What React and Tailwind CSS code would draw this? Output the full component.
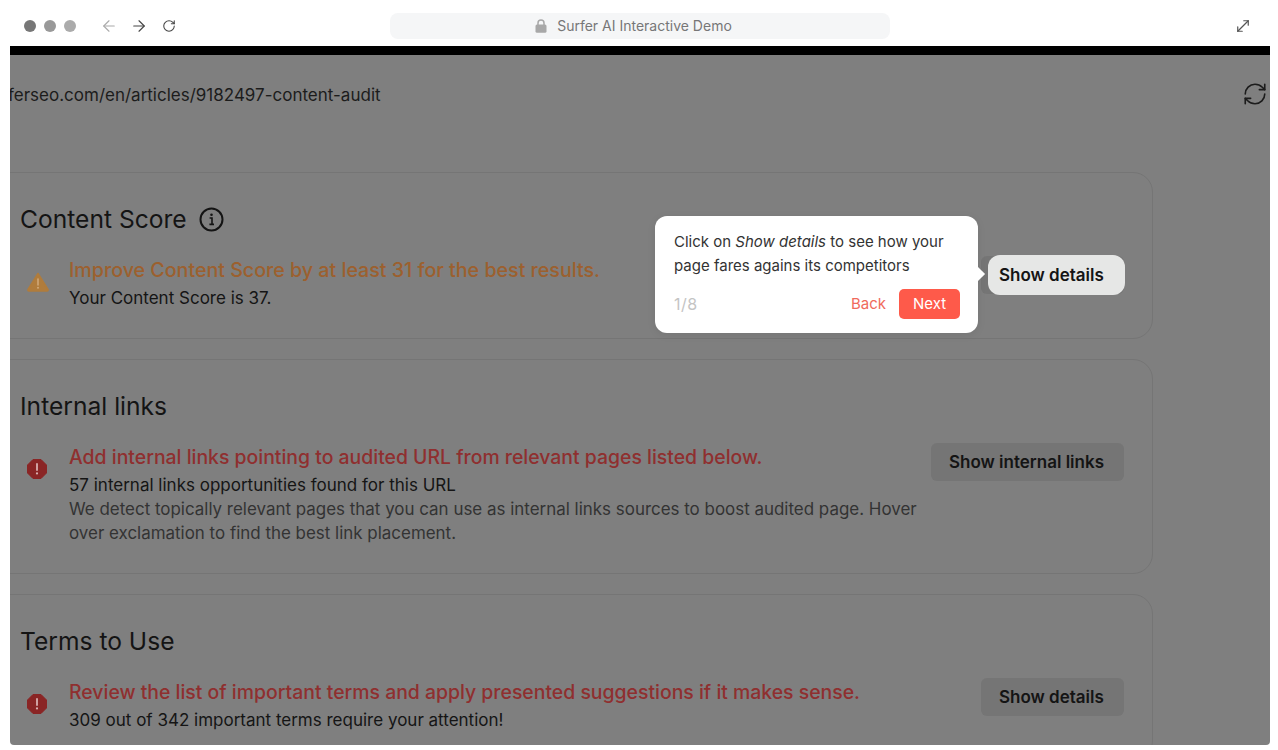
import React from "react";
import { ArrowLeft, ArrowRight, RotateCw, MoveDiagonal, RefreshCw } from "lucide-react";

const font = { fontFamily: "Inter, 'Liberation Sans', sans-serif" };

function InfoIcon() {
  return (
    <svg width="25" height="25" viewBox="0 0 25 25" fill="none" className="ml-[12px]">
      <circle cx="12.5" cy="12.5" r="11" stroke="#141414" strokeWidth="2" />
      <path d="M10.6 11h2.4v6.2M10.4 17.4h4.6" stroke="#141414" strokeWidth="1.6" />
      <circle cx="12.5" cy="7.8" r="1.3" fill="#141414" />
    </svg>
  );
}

function LockIcon() {
  return (
    <svg width="12" height="14" viewBox="0 0 12 14" fill="none">
      <path d="M3 6.5V4a3 3 0 0 1 6 0v2.5" stroke="#a8a8a8" strokeWidth="1.5" />
      <rect x="0.5" y="5.5" width="11" height="8.2" rx="1.5" fill="#a8a8a8" />
    </svg>
  );
}

function WarnIcon() {
  return (
    <svg width="22" height="20" viewBox="0 0 22 20">
      <path d="M11 1.5 21 17.5a1 1 0 0 1-.8 1.5H1.8a1 1 0 0 1-.8-1.5Z" fill="#b07c3c" stroke="#b07c3c" strokeWidth="1.5" strokeLinejoin="round" />
      <path d="M11 7v6" stroke="#d0a878" strokeWidth="1.6" strokeLinecap="round" />
      <circle cx="11" cy="15.8" r="1" fill="#d0a878" />
    </svg>
  );
}

function ErrorIcon() {
  return (
    <svg width="20" height="20" viewBox="0 0 20 20">
      <path d="M6 0.5h8L19.5 6v8L14 19.5H6L0.5 14V6Z" fill="#8a2525" stroke="#8a2525" strokeLinejoin="round" />
      <path d="M10 5v6" stroke="#d8b0b0" strokeWidth="1.8" strokeLinecap="round" />
      <circle cx="10" cy="14.4" r="1.1" fill="#d8b0b0" />
    </svg>
  );
}

function Card({ title, info, icon, heading, headingClass, children, button, buttonClass }) {
  return (
    <section className="w-[1173px] -ml-[30px] rounded-[20px] border border-[#757575] pl-[39px] pr-[28px] pt-[31px] pb-[28px]">
      <div className="flex items-center h-[30px] text-[24.6px] leading-[30px] text-[#141414]">
        <span>{title}</span>
        {info && <InfoIcon />}
      </div>
      <div className="mt-[21px] flex items-start justify-between">
        <div className="flex items-start">
          <div className="w-[49px] h-[54px] flex items-center pl-[7px] shrink-0">{icon}</div>
          <div className="w-[856px]">
            <div className={"leading-[30px] font-medium mb-px " + headingClass}>{heading}</div>
            {children}
          </div>
        </div>
        <button className={"mt-px h-[38px] rounded-[6px] bg-[#757575] pl-[18px] pt-px text-left text-[17px] font-semibold text-[#141414] shrink-0 " + buttonClass}>
          {button}
        </button>
      </div>
    </section>
  );
}

export default function App() {
  return (
    <div className="w-[1278px] h-[750px] bg-white overflow-hidden flex flex-col" style={font}>
      <header className="h-[46px] shrink-0 flex items-center pt-[6px] pl-[24px] pr-[26px]">
        <div className="flex items-center gap-[8px]">
          <span className="w-3 h-3 rounded-full bg-[#777777]" />
          <span className="w-3 h-3 rounded-full bg-[#999999]" />
          <span className="w-3 h-3 rounded-full bg-[#ababab]" />
        </div>
        <div className="flex items-center ml-[24px] gap-[12px]">
          <span className="w-[18px] flex justify-center"><ArrowLeft size={18} strokeWidth={1.5} className="text-[#aaaaaa]" /></span>
          <span className="w-[18px] flex justify-center"><ArrowRight size={18} strokeWidth={1.5} className="text-[#444444]" /></span>
          <span className="w-[18px] flex justify-center"><RotateCw size={14} strokeWidth={1.8} className="text-[#444444]" /></span>
        </div>
        <div className="ml-[212px] w-[500px] h-[26px] rounded-[8px] bg-[#f5f6f7] flex items-center justify-center gap-[10px] pr-[13px] text-[14px] text-[#777777]">
          <LockIcon />
          <span className="-mt-px">Surfer AI Interactive Demo</span>
        </div>
        <MoveDiagonal size={18} strokeWidth={1.6} className="ml-auto text-[#555555]" />
      </header>

      <main className="relative ml-[10px] mr-[8px] mb-[5px] flex-1 min-h-0 overflow-hidden rounded-b-[4px] bg-[#7f7f7f]">
        <div className="h-[9px] bg-black" />
        <div className="flex items-center justify-between h-[24px] mt-[28px] pr-[2px]">
          <span className="-ml-[2px] text-[17px] leading-[24px] text-[#1c1c1c] whitespace-nowrap">ferseo.com/en/articles/9182497-content-audit</span>
          <RefreshCw size={26} strokeWidth={1.5} className="text-[#1c1c1c] -mt-[2px]" />
        </div>
        <div className="mt-[65px] flex flex-col gap-[20px]">
          <Card
            title="Content Score"
            info
            icon={<WarnIcon />}
            heading="Improve Content Score by at least 31 for the best results."
            headingClass="text-[19.65px] text-[#9c602e]"
            button="Show details"
            buttonClass="w-[143px]"
          >
            <p className="text-[17px] leading-[24px] text-[#151515]">Your Content Score is 37.</p>
          </Card>
          <Card
            title="Internal links"
            icon={<ErrorIcon />}
            heading="Add internal links pointing to audited URL from relevant pages listed below."
            headingClass="text-[19.42px] text-[#8f2f2f]"
            button="Show internal links"
            buttonClass="w-[193px]"
          >
            <p className="text-[17px] leading-[24px] text-[#151515]">57 internal links opportunities found for this URL</p>
            <p className="text-[16.96px] leading-[24px] text-[#333333]">We detect topically relevant pages that you can use as internal links sources to boost audited page. Hover over exclamation to find the best link placement.</p>
          </Card>
          <Card
            title="Terms to Use"
            icon={<ErrorIcon />}
            heading="Review the list of important terms and apply presented suggestions if it makes sense."
            headingClass="text-[19.42px] text-[#8f2f2f]"
            button="Show details"
            buttonClass="w-[143px]"
          >
            <p className="text-[17px] leading-[24px] text-[#151515]">309 out of 342 important terms require your attention!</p>
          </Card>
        </div>

        <div className="absolute left-[978px] top-[209px] flex items-center pl-[11px] pt-[2px] w-[137px] h-[40px] rounded-[12px] bg-[#e6e7e6] text-[17px] font-semibold text-[#141414]">
          Show details
        </div>
        <div className="absolute left-[645px] top-[170px] w-[323px] h-[117px] rounded-[12px] bg-white pl-[19px] pr-[18px] pt-[14px] shadow-[0_2px_8px_rgba(0,0,0,0.08)]">
          <p className="text-[15px] leading-[24px] text-[#333333]">
            Click on <em>Show details</em> to see how your page fares agains its competitors
          </p>
          <div className="mt-[11px] flex items-center text-[15px]">
            <span className="text-[16px] tracking-[0.5px] text-[#c4c4c4]">1/8</span>
            <span className="ml-auto text-[#f06a5c]">Back</span>
            <span className="ml-[13px] w-[61px] h-[30px] rounded-[5px] bg-[#fe5a4a] text-white flex items-center justify-center">Next</span>
          </div>
          <span className="absolute -right-[5px] top-[53px] w-[10px] h-[10px] rotate-45 bg-white" />
        </div>
      </main>
    </div>
  );
}
